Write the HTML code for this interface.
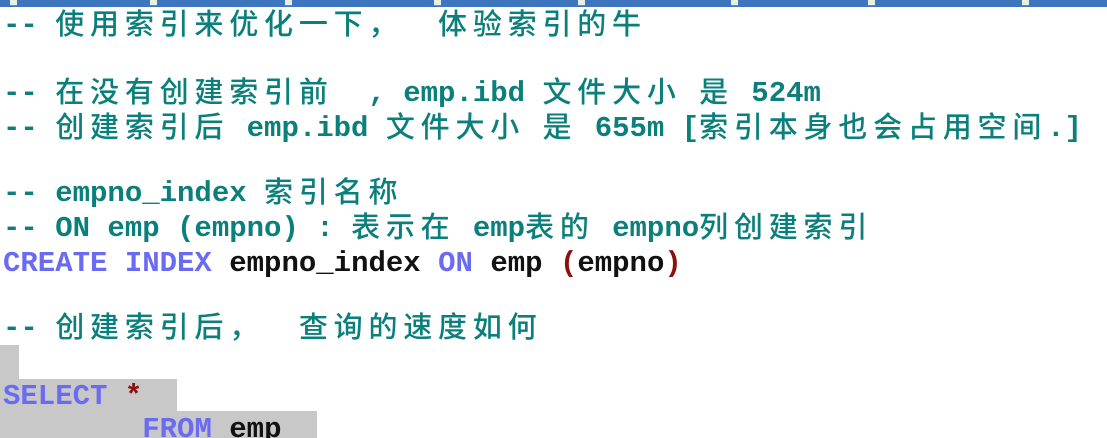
<!DOCTYPE html>
<html><head><meta charset="utf-8"><style>
html,body{margin:0;padding:0;background:#fff;width:1107px;height:438px;overflow:hidden;position:relative}
.bar{position:absolute;left:0;top:0;width:1107px;height:7px;background:#3d76bf;z-index:2}
.ic{position:absolute;top:0;width:7px;height:5px;background:#e8f0e0;border-bottom:1px solid #6a9a50;z-index:3}
.sel{position:absolute;background:#c8c8c8}
.l{position:absolute;left:3px;height:34px;margin:0;font-family:"Liberation Mono",monospace;font-weight:bold;font-size:29px;line-height:34px;color:#0b7f7b;white-space:pre}
.c{font-family:"Noto Sans CJK SC",sans-serif;font-weight:500;font-size:29px;line-height:1px;letter-spacing:5.8px;position:relative;top:1px}
.k{color:#6b6bf2}.b{color:#111}.p{color:#8b1010}
</style></head><body>
<div class="bar"></div>
<div class="ic" style="left:10px"></div><div class="ic" style="left:150px"></div><div class="ic" style="left:285px"></div><div class="ic" style="left:434px"></div><div class="ic" style="left:578px"></div><div class="ic" style="left:731px"></div><div class="ic" style="left:868px"></div><div class="ic" style="left:1022px"></div>
<div class="sel" style="left:0;top:345px;width:19px;height:34px"></div>
<div class="sel" style="left:0;top:379px;width:177px;height:32px"></div>
<div class="sel" style="left:0;top:411px;width:317px;height:27px"></div>
<div class="l" style="top:9px">-- <span class="c">使用索引来优化一下，</span>  <span class="c">体验索引的牛</span></div>
<div class="l" style="top:77px">-- <span class="c">在没有创建索引前</span>  , emp.ibd <span class="c">文件大小</span> <span class="c">是</span> 524m</div>
<div class="l" style="top:112px">-- <span class="c">创建索引后</span> emp.ibd <span class="c">文件大小</span> <span class="c">是</span> 655m [<span class="c">索引本身也会占用空间</span>.]</div>
<div class="l" style="top:177px">-- empno_index <span class="c">索引名称</span></div>
<div class="l" style="top:212px">-- ON emp (empno) : <span class="c">表示在</span> emp<span class="c">表的</span> empno<span class="c">列创建索引</span></div>
<div class="l" style="top:247px"><span class="k">CREATE INDEX</span> <span class="b">empno_index</span> <span class="k">ON</span> <span class="b">emp</span> <span class="p">(</span><span class="b">empno</span><span class="p">)</span></div>
<div class="l" style="top:312px">-- <span class="c">创建索引后，</span>  <span class="c">查询的速度如何</span></div>
<div class="l" style="top:380px"><span class="k">SELECT</span> <span class="p">*</span></div>
<div class="l" style="top:413px">        <span class="k">FROM</span> <span class="b">emp</span></div>
</body></html>
